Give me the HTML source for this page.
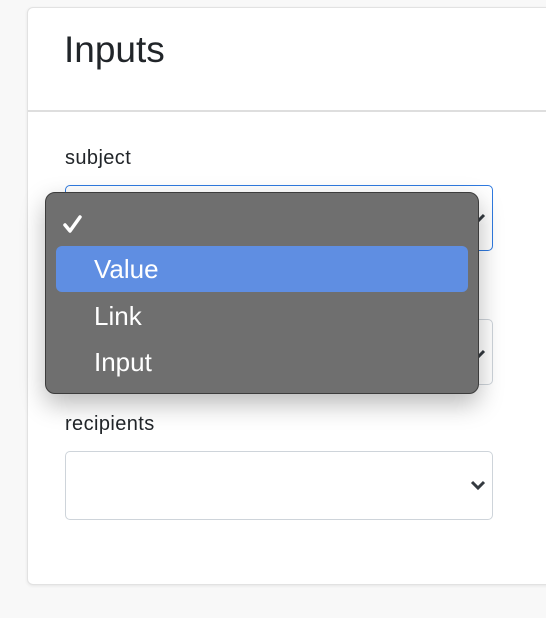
<!DOCTYPE html>
<html><head><style>
html,body{margin:0;padding:0;}
body{width:546px;height:618px;background:#f8f8f8;position:relative;overflow:hidden;font-family:"Liberation Sans",sans-serif;}
.card{position:absolute;left:27px;top:7px;width:540px;height:576px;background:#fff;border:1px solid #e2e2e2;border-radius:6px;box-shadow:0 1px 3px rgba(0,0,0,.08);}
.hdr{position:absolute;left:0;top:0;right:0;height:102px;border-bottom:2px solid #dedede;}
.title{position:absolute;left:36px;top:21px;font-size:37px;color:#212529;}
.lbl{position:absolute;left:37px;font-size:20px;letter-spacing:0.4px;color:#212529;}
.sel{position:absolute;left:37px;width:426px;height:64px;border:1px solid #ced4da;border-radius:5px;background:#fff;}
.chev{position:absolute;right:6px;top:24px;}
.dd{position:absolute;left:45px;top:192px;width:432px;height:200px;background:#6f6f6f;border:1px solid #3c3c3c;border-radius:10px;box-shadow:0 10px 25px rgba(0,0,0,.28);}
.hl{position:absolute;left:10px;top:53px;width:412px;height:46px;background:#5f8ee2;border-radius:6px;}
.opt{position:absolute;left:48px;font-size:26px;color:#fff;line-height:46px;}
</style></head><body>
<div class="card">
 <div class="hdr"><div class="title">Inputs</div></div>
 <div class="lbl" style="top:139px">subject</div>
 <div class="sel" style="top:177px;border:1px solid #2f7ae0;"><svg class="chev" width="16" height="12" viewBox="0 0 16 12" style="top:26px"><path d="M2 3l6 6 6-6" stroke="#343a40" stroke-width="3" fill="none"/></svg></div>
 <div class="sel" style="top:311px"><svg class="chev" width="16" height="12" viewBox="0 0 16 12" style="top:28px"><path d="M2 3l6 6 6-6" stroke="#343a40" stroke-width="3" fill="none"/></svg></div>
 <div class="lbl" style="top:405px">recipients</div>
 <div class="sel" style="top:443px;height:67px"><svg class="chev" width="16" height="12" viewBox="0 0 16 12" style="top:27px"><path d="M2 3l6 6 6-6" stroke="#343a40" stroke-width="3" fill="none"/></svg></div>
</div>
<div class="dd">
 <svg style="position:absolute;left:17px;top:22px" width="20" height="18" viewBox="0 0 20 18"><path d="M2 10l5 6L17 2" stroke="#fff" stroke-width="3.5" fill="none" stroke-linecap="round" stroke-linejoin="round"/></svg>
 <div class="hl"></div>
 <div class="opt" style="top:53px">Value</div>
 <div class="opt" style="top:100px">Link</div>
 <div class="opt" style="top:146px">Input</div>
</div>
</body></html>
